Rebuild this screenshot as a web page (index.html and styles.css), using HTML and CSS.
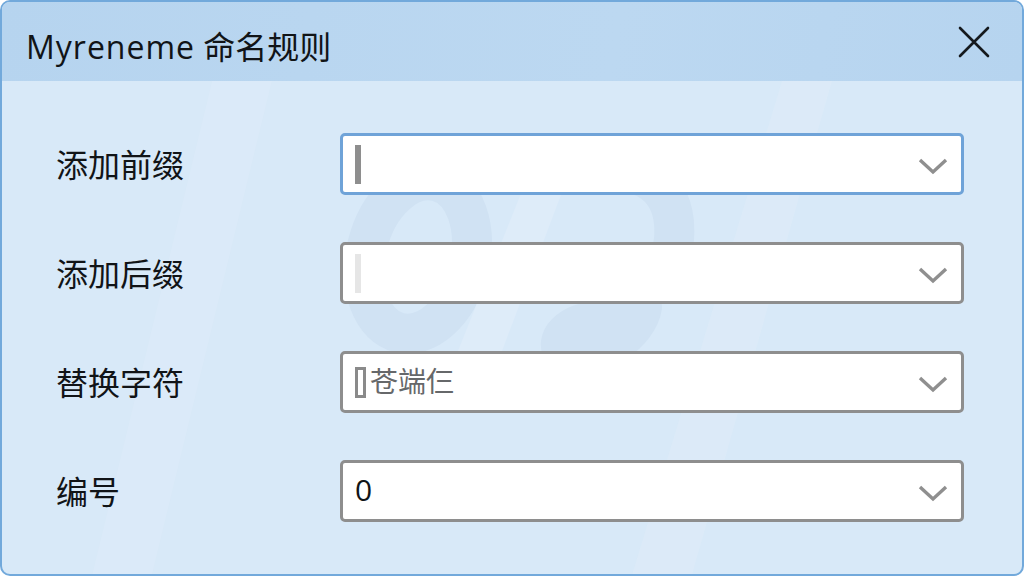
FILE: index.html
```html
<!DOCTYPE html>
<html lang="zh-CN">
<head>
    <meta charset="UTF-8">
    <title>Myreneme 命名规则</title>
    <link rel="stylesheet" href="styles.css">
</head>
<body>
    <div class="dialog">
        <div class="titleBar">
            <span class="titleText"><span class="titleLatin">Myreneme</span> 命名规则</span>
            <svg class="closeIcon" width="32" height="32" viewBox="0 0 32 32">
                <path d="M2 2 L30 30 M30 2 L2 30" fill="none" stroke="#15191d" stroke-width="2.6" stroke-linecap="round"/>
            </svg>
        </div>
        <div class="formArea">
            <!-- faint watermark behind the fields -->
            <svg class="watermark" width="1020" height="494" viewBox="0 0 1020 494">
                <path d="M210 0 L270 0 L150 494 L90 494 Z" fill="#e3effa" opacity="0.25"/>
                <path d="M780 0 L830 0 L690 494 L630 494 Z" fill="#e3effa" opacity="0.3"/>
                <ellipse cx="416" cy="176" rx="52" ry="78" transform="rotate(14 416 176)" fill="none" stroke="#d0e2f3" stroke-width="40"/>
                <path d="M528 90 L568 90 L500 270 L456 270 Z" fill="#deecf9"/>
                <path d="M590 92 C640 84 676 104 672 158 C668 200 630 222 600 240 C566 240 552 262 562 270 C600 280 636 250 640 226" fill="none" stroke="#d0e2f3" stroke-width="40" stroke-linecap="round"/>
            </svg>
            <div class="fieldRow">
                <label class="fieldLabel">添加前缀</label>
                <div class="comboBox comboFocus">
                    <span class="caret"></span>
                    <svg class="chevron" width="30" height="18" viewBox="0 0 30 18"><path d="M2 3 L15 15 L28 3" fill="none" stroke="#8f8f8f" stroke-width="3.4"/></svg>
                </div>
            </div>
            <div class="fieldRow">
                <label class="fieldLabel">添加后缀</label>
                <div class="comboBox">
                    <span class="caret caretFaint"></span>
                    <svg class="chevron" width="30" height="18" viewBox="0 0 30 18"><path d="M2 3 L15 15 L28 3" fill="none" stroke="#8f8f8f" stroke-width="3.4"/></svg>
                </div>
            </div>
            <div class="fieldRow">
                <label class="fieldLabel">替换字符</label>
                <div class="comboBox">
                    <span class="caret caretHollow"></span>
                    <span class="comboValue valueGrey">苍端仨</span>
                    <svg class="chevron" width="30" height="18" viewBox="0 0 30 18"><path d="M2 3 L15 15 L28 3" fill="none" stroke="#8f8f8f" stroke-width="3.4"/></svg>
                </div>
            </div>
            <div class="fieldRow">
                <label class="fieldLabel">编号</label>
                <div class="comboBox">
                    <span class="comboValue">0</span>
                    <svg class="chevron" width="30" height="18" viewBox="0 0 30 18"><path d="M2 3 L15 15 L28 3" fill="none" stroke="#8f8f8f" stroke-width="3.4"/></svg>
                </div>
            </div>
        </div>
    </div>
</body>
</html>
```

FILE: styles.css
```css
/* dialog fills the whole window */
body {
  margin: 0;
  padding: 0;
  font-family: "Open Sans", "Noto Sans CJK SC", sans-serif;
  color: #111417;
}

.dialog {
  box-sizing: border-box;
  width: 1024px;
  height: 576px;
  border: 2px solid #72a9db;
  border-radius: 10px;
  background-color: #d8e9f8;
  overflow: hidden;
  display: flex;
  flex-direction: column;
}

.titleBar {
  box-sizing: border-box;
  height: 79px;
  flex-shrink: 0;
  padding: 10px 32px 0 24px;
  background: linear-gradient(100deg, #b6d4ef, #bcd8f1 60%, #b6d4ef);
  display: flex;
  align-items: center;
  justify-content: space-between;
}

.titleText {
  font-size: 32px;
  line-height: 1;
}

.titleLatin {
  letter-spacing: 1px;
}

.closeIcon {
  display: block;
  margin-bottom: 9px;
}

.formArea {
  position: relative;
  flex: 1;
  padding: 52px 58px 0 55px;
  display: flex;
  flex-direction: column;
  gap: 47px;
}

.watermark {
  position: absolute;
  left: 0;
  top: 0;
}

.fieldRow {
  position: relative;
  height: 62px;
  display: flex;
  align-items: center;
}

.fieldLabel {
  width: 283px;
  flex-shrink: 0;
  padding-top: 1px;
  font-size: 32px;
  line-height: 1;
  text-indent: -1px;
}

.comboBox {
  box-sizing: border-box;
  width: 624px;
  height: 62px;
  padding: 0 12px;
  background-color: #fff;
  border: 3px solid #8e8e8e;
  border-radius: 5px;
  display: flex;
  align-items: center;
  gap: 4px;
  position: relative;
}

.comboFocus {
  border-color: #6fa3d8;
}

.comboValue {
  padding-bottom: 3px;
  font-size: 30px;
  line-height: 1;
}

.valueGrey {
  font-size: 28px;
  color: #66686a;
}

.caret {
  width: 6px;
  height: 39px;
  background-color: #8e8e8e;
}

.caretFaint {
  background-color: #e6e6e6;
}

.caretHollow {
  box-sizing: border-box;
  width: 11px;
  height: 31px;
  background: none;
  border: 3px solid #8a8a8a;
}

.chevron {
  position: absolute;
  right: 13px;
  top: 21px;
}
```
